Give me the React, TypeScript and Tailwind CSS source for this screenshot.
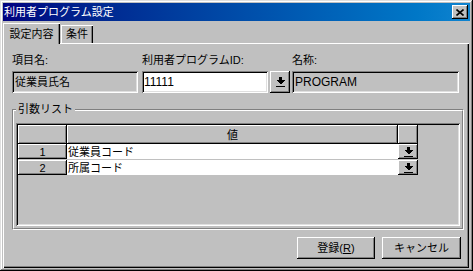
import React from "react";

const raised = "shadow-[inset_-1px_-1px_#000,inset_1px_1px_#fff,inset_-2px_-2px_#808080]";
const sunken = "shadow-[inset_1px_1px_#808080,inset_-1px_-1px_#fff,inset_2px_2px_#000,inset_-2px_-2px_#dfdfdf]";

function DownArrow() {
  return (
    <svg width="9" height="10" viewBox="0 0 9 10" shapeRendering="crispEdges">
      <rect x="3" y="0" width="3" height="3" fill="#000" />
      <polygon points="0,3 9,3 4.5,7.5" fill="#000" />
      <rect x="0" y="9" width="9" height="1" fill="#000" />
    </svg>
  );
}

function DropButton({ className }: { className: string }) {
  return (
    <div className={`${raised} ${className} flex items-center justify-center bg-[#c0c0c0]`}>
      <DownArrow />
    </div>
  );
}

const rows = [
  { no: "1", value: "従業員コード" },
  { no: "2", value: "所属コード" },
];

export default function App() {
  return (
    <div className="flex h-[271px] w-[473px] flex-col bg-[#c0c0c0] p-[3px] font-['Liberation_Sans','Noto_Sans_CJK_JP',sans-serif] text-[11px] leading-[14px] text-black shadow-[inset_-1px_-1px_#000,inset_1px_1px_#dfdfdf,inset_-2px_-2px_#808080,inset_2px_2px_#fff]">
      {/* title bar */}
      <div className="flex h-[18px] shrink-0 items-center justify-between bg-linear-to-r from-[#000080] to-[#1084d0] pl-[1px]">
        <span className="text-white">利用者プログラム設定</span>
        <div className={`${raised} mr-[2px] flex h-[14px] w-[16px] items-center justify-center bg-[#c0c0c0]`}>
          <svg width="8" height="7" viewBox="0 0 8 7">
            <path d="M0.5 0.5 L7.5 6.5 M7.5 0.5 L0.5 6.5" stroke="#000" strokeWidth="1.6" />
          </svg>
        </div>
      </div>

      {/* tabs */}
      <div className="flex h-[22px] shrink-0 items-end">
        <div className="relative z-10 -mb-px flex h-[21px] w-[57px] items-center justify-center bg-[#c0c0c0] shadow-[inset_1px_1px_#fff,inset_-1px_0_#000,inset_-2px_0_#808080]">
          設定内容
        </div>
        <div className="ml-px flex h-[18px] w-[32px] items-center justify-center shadow-[inset_1px_1px_#fff,inset_-1px_0_#000,inset_-2px_0_#808080]">
          条件
        </div>
      </div>

      {/* panel */}
      <div className="mr-px flex flex-1 flex-col pl-[9px] pt-[10px] shadow-[inset_1px_1px_#fff,inset_-1px_-1px_#000,inset_-2px_-2px_#808080]">
        <div className="flex gap-[4px]">
          <div className="flex w-[126px] flex-col">
            <div className="h-[18px]">項目名:</div>
            <div className={`${sunken} flex h-[22px] items-center pl-[3px]`}>従業員氏名</div>
          </div>
          <div className="flex w-[148px] flex-col">
            <div className="h-[18px]">利用者プログラムID:</div>
            <div className="flex h-[22px] gap-[2px]">
              <div className={`${sunken} flex w-[126px] items-center bg-white pl-[2px] text-[12px]`}>11111</div>
              <DropButton className="w-[20px]" />
            </div>
          </div>
          <div className="ml-[-2px] flex w-[167px] flex-col">
            <div className="h-[18px]">名称:</div>
            <div className={`${sunken} flex h-[22px] items-center pl-[3px] text-[12px]`}>PROGRAM</div>
          </div>
        </div>

        {/* group box */}
        <div className="relative mt-[16px] h-[121px] w-[452px] border-t border-l border-r border-b border-t-[#808080] border-l-[#808080] border-r-white border-b-white">
          <span className="absolute -top-[8px] left-[3px] bg-[#c0c0c0] px-[2px]">引数リスト</span>
          <div className="h-full border border-t-white border-l-white border-r-[#808080] border-b-[#808080] px-[2px] pt-[12px]">
            <div className={`${sunken} h-[103px] w-[444px] p-[2px]`}>
              <div className="flex h-[19px]">
                <div className={`${raised} w-[49px]`} />
                <div className={`${raised} flex w-[331px] items-center justify-center`}>値</div>
                <div className={`${raised} w-[20px]`} />
              </div>
              {rows.map((r) => (
                <div key={r.no} className="mb-px flex h-[15px]">
                  <div className={`${raised} flex w-[49px] items-center justify-center`}>{r.no}</div>
                  <div className="flex w-[331px] items-center bg-white pl-[1px]">{r.value}</div>
                  <DropButton className="w-[20px]" />
                </div>
              ))}
            </div>
          </div>
        </div>

        {/* buttons */}
        <div className="mt-[7px] flex justify-end gap-[7px] pr-[8px]">
          <button className={`${raised} flex h-[22px] w-[78px] items-center justify-center`}>
            登録(<span className="underline">R</span>)
          </button>
          <button className={`${raised} flex h-[22px] w-[79px] items-center justify-center`}>
            キャンセル
          </button>
        </div>
      </div>
    </div>
  );
}
